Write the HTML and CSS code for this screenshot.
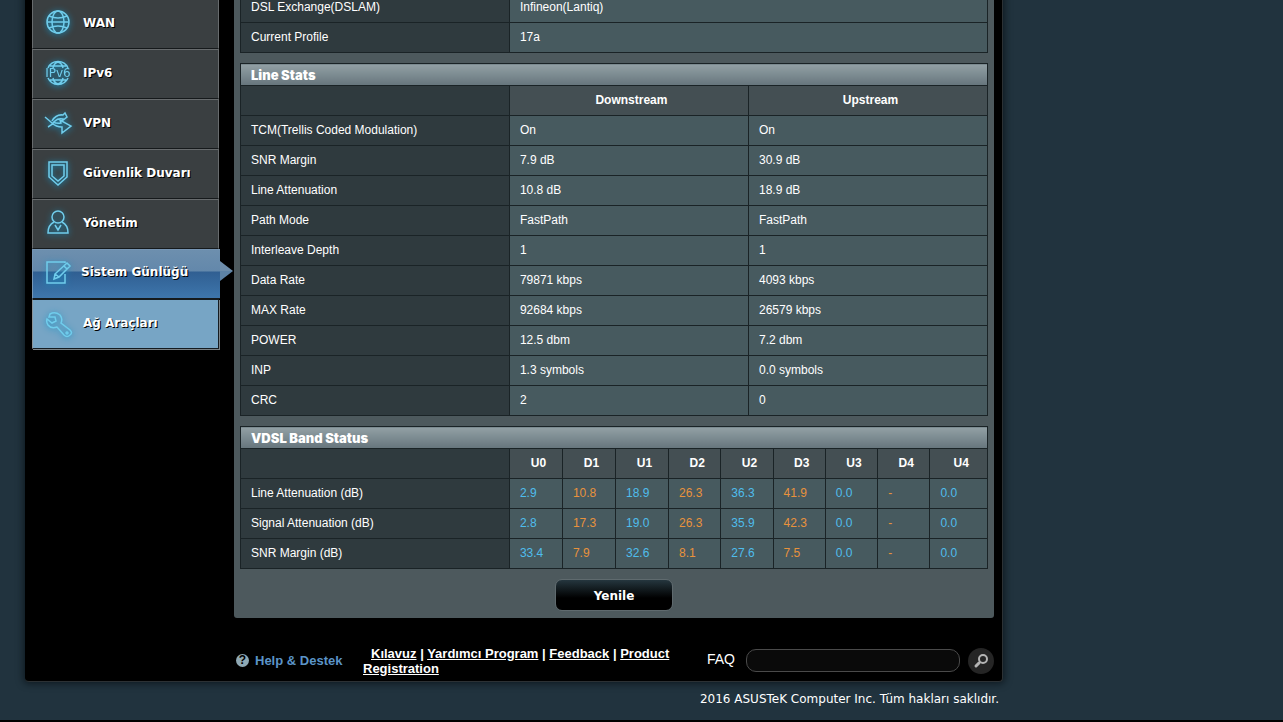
FILE: index.html
```html
<!DOCTYPE html>
<html lang="tr">
<head>
<meta charset="utf-8">
<title>DSL Log</title>
<link rel="stylesheet" href="styles.css">
</head>
<body>
<div class="viewport">
<div class="frame">
  <div class="columns">
    <nav class="sidebar">
      <a class="item" href="#"><svg class="icon" viewBox="0 0 30 30"><circle cx="15" cy="14" r="11"/><ellipse cx="15" cy="14" rx="6" ry="11"/><path d="M4 14H26M6 8Q15 12 24 8M6 20Q15 16 24 20"/></svg>WAN</a>
      <a class="item" href="#"><svg class="icon" viewBox="0 0 30 30"><path d="M5 10A11 11 0 0 1 25 10M5 20A11 11 0 0 0 25 20M10 10Q11 5 15 4Q19 5 20 10M10 20Q11 25 15 26Q19 25 20 20M7 8H23M7 22H23"/><text class="glyph" x="15" y="19" text-anchor="middle">IPv6</text></svg>IPv6</a>
      <a class="item" href="#"><svg class="icon" viewBox="0 0 30 30"><path d="M2 9L9 15Q13 19 19 19L19 25L28 18L17 12L18 15Q14 16 10 14M5 19Q9 17 12 13Q15 10 20 11L19 13L24 9L22 5L20 7Q13 6 9 13"/></svg>VPN</a>
      <a class="item" href="#"><svg class="icon" viewBox="0 0 30 30"><path d="M6 4H24V19L15 27L6 19Z"/><path d="M9 7H21V18L15 23L9 18Z"/></svg>Güvenlik Duvarı</a>
      <a class="item" href="#"><svg class="icon" viewBox="0 0 30 30"><circle cx="15" cy="9" r="6"/><path d="M11 14Q5 17 5 25H25Q25 17 19 14M12 17L15 22L18 17"/></svg>Yönetim</a>
      <a class="item current" href="#"><svg class="icon" viewBox="0 0 30 30"><path d="M22 17V26H4V5H22V6M12 17L24 6L27 9L16 20L11 22ZM12 17L16 20M21 9L24 12"/></svg>Sistem Günlüğü</a>
      <a class="item tools" href="#"><svg class="icon" viewBox="0 0 30 30"><path d="M7 6Q12 3 17 7Q20 11 18 15L27 22Q30 25 27 27Q24 30 21 27L14 19Q8 21 5 17Q3 14 4 11L9 15L13 13L12 9L6 9Z"/><circle cx="24" cy="25" r="1"/></svg>Ağ Araçları</a>
    </nav>
    <main class="panel">
      <table class="grid">
        <colgroup><col class="label-col"><col></colgroup>
        <tr><th scope="row">DSL Exchange(DSLAM)</th><td>Infineon(Lantiq)</td></tr>
        <tr><th scope="row">Current Profile</th><td>17a</td></tr>
      </table>
      <table class="grid">
        <colgroup><col class="label-col"><col><col></colgroup>
        <thead>
          <tr class="title"><th colspan="3">Line Stats</th></tr>
          <tr class="heads"><td class="blank"></td><th scope="col">Downstream</th><th scope="col">Upstream</th></tr>
        </thead>
        <tbody>
          <tr><th scope="row">TCM(Trellis Coded Modulation)</th><td>On</td><td>On</td></tr>
          <tr><th scope="row">SNR Margin</th><td>7.9 dB</td><td>30.9 dB</td></tr>
          <tr><th scope="row">Line Attenuation</th><td>10.8 dB</td><td>18.9 dB</td></tr>
          <tr><th scope="row">Path Mode</th><td>FastPath</td><td>FastPath</td></tr>
          <tr><th scope="row">Interleave Depth</th><td>1</td><td>1</td></tr>
          <tr><th scope="row">Data Rate</th><td>79871 kbps</td><td>4093 kbps</td></tr>
          <tr><th scope="row">MAX Rate</th><td>92684 kbps</td><td>26579 kbps</td></tr>
          <tr><th scope="row">POWER</th><td>12.5 dbm</td><td>7.2 dbm</td></tr>
          <tr><th scope="row">INP</th><td>1.3 symbols</td><td>0.0 symbols</td></tr>
          <tr><th scope="row">CRC</th><td>2</td><td>0</td></tr>
        </tbody>
      </table>
      <table class="grid bands">
        <colgroup><col class="label-col"><col span="3" class="wide-band-col"><col span="5" class="band-col"><col></colgroup>
        <thead>
          <tr class="title"><th colspan="10">VDSL Band Status</th></tr>
          <tr class="heads"><td class="blank"></td><th scope="col">U0</th><th scope="col">D1</th><th scope="col">U1</th><th scope="col">D2</th><th scope="col">U2</th><th scope="col">D3</th><th scope="col">U3</th><th scope="col">D4</th><th scope="col">U4</th></tr>
        </thead>
        <tbody>
          <tr><th scope="row">Line Attenuation (dB)</th><td>2.9</td><td>10.8</td><td>18.9</td><td>26.3</td><td>36.3</td><td>41.9</td><td>0.0</td><td>-</td><td>0.0</td></tr>
          <tr><th scope="row">Signal Attenuation (dB)</th><td>2.8</td><td>17.3</td><td>19.0</td><td>26.3</td><td>35.9</td><td>42.3</td><td>0.0</td><td>-</td><td>0.0</td></tr>
          <tr><th scope="row">SNR Margin (dB)</th><td>33.4</td><td>7.9</td><td>32.6</td><td>8.1</td><td>27.6</td><td>7.5</td><td>0.0</td><td>-</td><td>0.0</td></tr>
        </tbody>
      </table>
      <button class="refresh" type="button">Yenile</button>
    </main>
  </div>
  <footer class="footer">
    <a class="help" href="#"><span class="mark">?</span>Help &amp; Destek</a>
    <div class="links"><a href="#">Kılavuz</a> | <a href="#">Yardımcı Program</a> | <a href="#">Feedback</a> | <a href="#">Product Registration</a></div>
    <label class="faq" for="faq">FAQ</label>
    <input class="search" id="faq" type="text">
    <button class="go" type="button" aria-label="Search"><svg viewBox="0 0 26 26"><circle cx="15" cy="11" r="4"/><path class="handle" d="M11 15L8 18"/></svg></button>
  </footer>
</div>
<p class="copyright">2016 ASUSTeK Computer Inc. Tüm hakları saklıdır.</p>
</div>
</body>
</html>
```
FILE: styles.css
```css
* { box-sizing: border-box; }
html { background: #000; }
body {
  margin: 0;
  padding-bottom: 2px;
  min-height: 100vh;
  display: flex;
  background: #000;
  color: #fff;
  font: 12px/16px "Liberation Sans", Arial, sans-serif;
}
a { color: inherit; }
.viewport {
  flex: 1;
  overflow: hidden;
  background: #21333e;
}
.frame {
  max-width: 978px;
  margin: -8px 0 0 25px;
  padding: 0 8px 0 7px;
  background: #000;
  border: 1px solid #2c3134;
  border-width: 0 1px 1px 0;
  border-radius: 0 0 4px 4px;
  box-shadow: 0 0 7px 2px rgba(5, 12, 16, 0.6);
}
.columns { display: flex; gap: 14px; }

.sidebar { width: 188px; padding-top: 7px; flex: none; }
.item {
  display: flex;
  align-items: center;
  gap: 10px;
  height: 50px;
  margin-right: 1px;
  padding: 0 0 3px 10px;
  background: #3a3f41;
  border: 1px solid #676b6d;
  border-bottom-color: #15191b;
  color: #fff;
  font: bold 12px/16px "DejaVu Sans", Verdana, sans-serif;
  text-decoration: none;
  text-shadow: 1px 1px 0 #000;
}
.icon {
  width: 30px;
  height: 30px;
  flex: none;
  fill: none;
  stroke: #70cdec;
  stroke-width: 1.5;
  filter: drop-shadow(0 1px 3px #1593c4);
}
.glyph {
  fill: #70cdec;
  stroke: none;
  font: 12px "DejaVu Sans", Verdana, sans-serif;
  text-shadow: none;
}
.current {
  position: relative;
  gap: 8px;
  margin-right: 0;
  padding-bottom: 5px;
  border-color: #7796b4;
  border-right: 0;
  border-bottom-color: #15191b;
  background: linear-gradient(#6d8fae 0, #6388ab 21px, #305f92 22px, #3e76ac 100%);
}
.current::after {
  content: "";
  position: absolute;
  left: 100%;
  top: 11px;
  width: 13px;
  height: 20px;
  background: linear-gradient(#6d8dab 50%, #5d83a6 50%);
  clip-path: polygon(0 0, 100% 50%, 0 100%);
}
.tools {
  background: #77a5c5;
  border-color: #141b20 #141b20 #141b20 #8b9499;
  box-shadow: 1px 1px #7b8286;
}

.panel {
  flex: 1;
  min-width: 0;
  display: flex;
  flex-direction: column;
  gap: 10px;
  padding: 0 6px 7px;
  background: #4d595d;
  border-radius: 0 0 3px 3px;
}
.grid {
  width: 100%;
  table-layout: fixed;
  border-collapse: collapse;
}
.label-col { width: 36%; }
.wide-band-col { width: 7.1%; }
.band-col { width: 7%; }
.grid tr { height: 30px; }
.grid th, .grid td {
  padding: 0 5px 2px 10px;
  border: 1px solid #1a2326;
  background: #475a5f;
  text-align: left;
  font-weight: normal;
}
.grid tbody th, .grid .blank { background: #2f3a3e; }
.grid .heads th { background: #444f53; text-align: center; font-weight: bold; }
.grid .title { height: 22px; }
.grid .title th {
  padding-bottom: 0;
  background: linear-gradient(#92a0a5, #66757c);
  font: 900 13px/16px Inter, "Arial Black", sans-serif;
}
.bands td:nth-child(even) { color: #4fbdec; }
.bands td:nth-child(odd) { color: #e8923c; }
.refresh {
  align-self: center;
  width: 118px;
  height: 32px;
  padding: 2px 0 0;
  border: 1px solid #5f6a6e;
  border-radius: 7px;
  background: linear-gradient(#25363e, #000 60%);
  color: #fff;
  font: bold 12px/16px "DejaVu Sans", Verdana, sans-serif;
}

.footer {
  display: flex;
  align-items: center;
  min-height: 63px;
  padding: 22px 0 0 204px;
}
.help {
  display: flex;
  align-items: center;
  gap: 6px;
  width: 127px;
  color: #5b94c8;
  font-size: 13px;
  font-weight: bold;
  text-decoration: none;
}
.mark {
  width: 13px;
  height: 13px;
  border-radius: 50%;
  background: #8fa9b4;
  color: #000;
  font-size: 12px;
  line-height: 13px;
  text-align: center;
}
.links {
  flex: 1;
  text-indent: 8px;
  font: bold 13px/15px "Liberation Sans", Arial, sans-serif;
}
.faq { margin: 0 11px 4px 24px; font-size: 14px; }
.search {
  width: 214px;
  height: 23px;
  padding: 0 10px;
  border: 1px solid #4a4a4a;
  border-radius: 10px;
  background: #0a0a0a;
  color: #fff;
}
.go {
  width: 26px;
  height: 26px;
  margin-left: 8px;
  padding: 0;
  border: 0;
  border-radius: 50%;
  background: #252525;
}
.go svg { display: block; fill: none; stroke: #b4b4b4; stroke-width: 2; stroke-linecap: round; }
.handle { stroke-width: 3; }
.copyright {
  max-width: 999px;
  margin: 9px 0 0;
  text-align: right;
  font: 12px/16px "DejaVu Sans", Verdana, sans-serif;
}
```
